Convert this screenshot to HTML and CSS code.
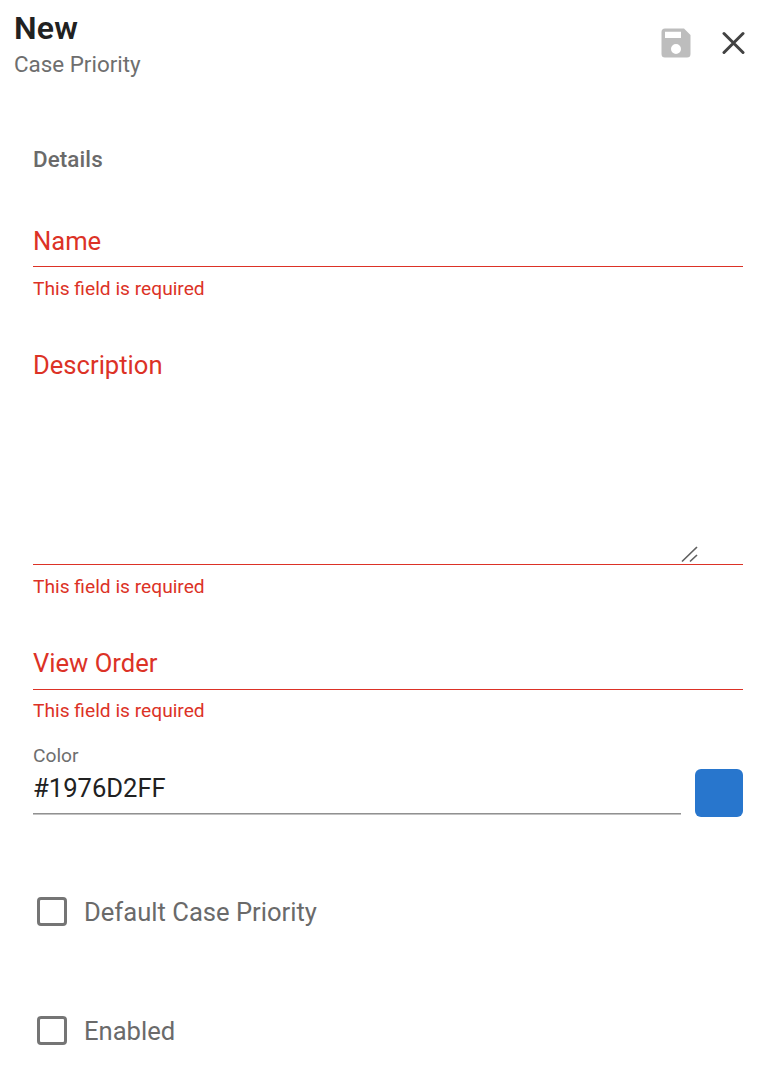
FILE: index.html
```html
<!DOCTYPE html>
<html lang="en">
<head>
<meta charset="utf-8">
<title>New Case Priority</title>
<link rel="stylesheet" href="styles.css">
</head>
<body>
<header class="header">
  <div class="heading">
    <h1 class="title">New</h1>
    <div class="subtitle">Case Priority</div>
  </div>
  <div class="actions">
    <svg class="save" width="30" height="30" viewBox="0 0 30 30"><path fill="#bdbdbd" fill-rule="evenodd" d="M4 .5h19L29.500 7v19a3.500 3.500 0 0 1-3.500 3.500H4A3.500 3.500 0 0 1 .5 26V4A3.500 3.500 0 0 1 4 .5zM4 3.700v6.300h16V3.700zM15 16a5 5 0 1 0 0 10 5 5 0 0 0 0-10z"/></svg>
    <svg class="close" width="24" height="24" viewBox="0 0 24 24"><path d="M3 2.500l19 19M22 2.500l-19 19" stroke="#424242" stroke-width="3" stroke-linecap="round"/></svg>
  </div>
</header>
<main class="form">
  <h2 class="section">Details</h2>
  <div class="field name"><div class="label">Name</div></div>
  <div class="error">This field is required</div>
  <div class="field description"><div class="label">Description</div>
    <svg class="grip" width="18" height="18" viewBox="0 0 18 18"><path d="M2 15.500L17 1M10 15.500L17 9" stroke="#616161" stroke-width="1.700"/></svg>
  </div>
  <div class="error">This field is required</div>
  <div class="field order"><div class="label">View Order</div></div>
  <div class="error order-error">This field is required</div>
  <div class="color-row">
    <div class="color-field"><div class="color-label">Color</div><div class="color-value">#1976D2FF</div></div>
    <div class="swatch"></div>
  </div>
  <div class="check first"><span class="box"></span><span class="check-label">Default Case Priority</span></div>
  <div class="check"><span class="box"></span><span class="check-label">Enabled</span></div>
</main>
</body>
</html>
```
FILE: styles.css
```css
* { box-sizing: border-box; }
body { margin: 0; background: #fff; font-family: Roboto, sans-serif; color: #212121; }
.header { display: flex; justify-content: space-between; height: 98px; padding: 8px 35px 0 14px; }
.title { margin: 0; font-size: 32px; line-height: 40px; font-weight: 600; letter-spacing: .2px; }
.subtitle { margin-top: 2px; font-size: 22.4px; line-height: 28px; color: #6e6e6e; }
.actions { display: flex; align-items: flex-start; gap: 31px; padding-top: 20px; }
.save { margin-right: -1px; }
.close { margin-top: 3px; }
.form { padding: 46px 37px 0 33px; }
.section { margin: 0; font-size: 22.4px; line-height: 30px; font-weight: 500; color: #6a6a6a; letter-spacing: .1px; }
.field { border-bottom: 1px solid #dc3226; color: #dc3226; }
.label { font-size: 25.6px; line-height: 32px; }
.name { height: 42px; margin-top: 51px; }
.description { display: flex; justify-content: space-between; height: 216px; margin-top: 47px; padding-right: 45px; }
.grip { align-self: flex-end; }
.order { height: 43px; margin-top: 47px; }
.error { margin-top: 9px; font-size: 19.2px; line-height: 26px; color: #dc3226; }
.order-error { margin-top: 8px; }
.color-row { display: flex; justify-content: space-between; margin-top: 19px; }
.color-field { width: 648px; height: 72px; border-bottom: 1px solid #c2c2c2; box-shadow: inset 0 -1px #919191; }
.color-label { font-size: 19.2px; line-height: 26px; color: #6e6e6e; }
.color-value { margin-top: 3px; font-size: 25.6px; line-height: 32px; }
.swatch { width: 48px; height: 48px; margin-top: 26px; border-radius: 6px; background: #2876cd; }
.check { display: flex; align-items: center; height: 40px; margin-top: 79px; padding-left: 4px; gap: 17px; }
.first { margin-top: 75px; }
.box { width: 30px; height: 29px; margin-bottom: 2px; border: 3px solid #757575; border-radius: 4px; }
.check-label { font-size: 25.6px; line-height: 32px; color: #6a6a6a; }
```
